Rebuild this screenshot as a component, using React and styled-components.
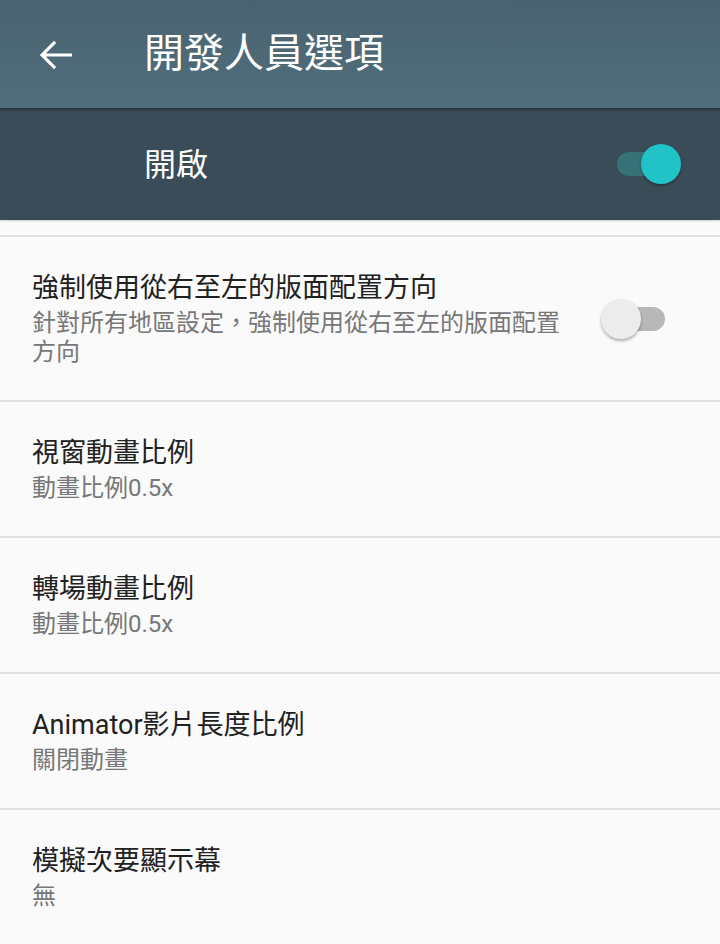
import React from "react";
import styled, { createGlobalStyle } from "styled-components";

const GlobalStyle = createGlobalStyle`
  html, body {
    margin: 0;
    padding: 0;
    background: #fafafa;
  }
  body {
    font-family: Roboto, "Noto Sans CJK TC", sans-serif;
  }
`;

const items = [
  {
    title: "強制使用從右至左的版面配置方向",
    summary: "針對所有地區設定，強制使用從右至左的版面配置方向",
    toggle: false,
  },
  { title: "視窗動畫比例", summary: "動畫比例0.5x" },
  { title: "轉場動畫比例", summary: "動畫比例0.5x" },
  { title: "Animator影片長度比例", summary: "關閉動畫" },
  { title: "模擬次要顯示幕", summary: "無" },
];

export default function App() {
  return (
    <Screen>
      <GlobalStyle />
      <Toolbar>
        <BackButton aria-label="back">
          <svg width="48" height="48" viewBox="0 0 24 24">
            <path
              fill="#ffffff"
              d="M20 11.2H6.9l5.2-5.2L11 4.9 3.9 12l7.1 7.1 1.1-1.1-5.2-5.2H20z"
            />
          </svg>
        </BackButton>
        <Title>開發人員選項</Title>
      </Toolbar>
      <MasterBar>
        <MasterLabel>開啟</MasterLabel>
        <Switch on />
      </MasterBar>
      <List>
        {items.map((item) => (
          <Item key={item.title}>
            <ItemText>
              <ItemTitle>{item.title}</ItemTitle>
              <ItemSummary>{item.summary}</ItemSummary>
            </ItemText>
            {item.toggle !== undefined && <Switch on={item.toggle} light />}
          </Item>
        ))}
      </List>
    </Screen>
  );
}

const Switch = ({ on, light }) => (
  <SwitchBox>
    <Track $on={on} $light={light} />
    <Thumb $on={on} />
  </SwitchBox>
);

const Screen = styled.div`
  width: 720px;
  height: 944px;
  overflow: hidden;
  background: #fafafa;
  display: flex;
  flex-direction: column;
`;

const Toolbar = styled.header`
  height: 108px;
  flex-shrink: 0;
  display: flex;
  align-items: center;
  padding-left: 32px;
  background: linear-gradient(#4a6370, #516e7c);
  box-shadow: 0 2px 3px rgba(0, 0, 0, 0.35);
  position: relative;
  z-index: 2;
`;

const BackButton = styled.div`
  width: 48px;
  height: 48px;
  display: flex;
  margin-top: 2px;
`;

const Title = styled.h1`
  margin: 0 0 0 64px;
  font-size: 40px;
  font-weight: 400;
  line-height: 48px;
  color: #ffffff;
`;

const MasterBar = styled.div`
  height: 112px;
  flex-shrink: 0;
  display: flex;
  align-items: center;
  justify-content: space-between;
  padding: 0 39px 0 144px;
  background: #3b4c59;
  box-shadow: 0 1px 2px rgba(0, 0, 0, 0.18);
  position: relative;
  z-index: 1;
`;

const MasterLabel = styled.div`
  font-size: 32px;
  line-height: 40px;
  color: #ffffff;
  margin-top: 2px;
`;

const List = styled.div`
  padding-top: 15px;
  display: flex;
  flex-direction: column;
`;

const Item = styled.div`
  display: flex;
  align-items: center;
  border-top: 2px solid #e0e0e0;
  padding: 33px 43px 33px 32px;
`;

const ItemText = styled.div`
  flex: 1;
  min-width: 0;
  margin-right: 30px;
`;

const ItemTitle = styled.div`
  font-size: 27px;
  line-height: 36px;
  color: #212121;
`;

const ItemSummary = styled.div`
  font-size: 24px;
  line-height: 29px;
  margin-top: 3px;
  color: #777777;
`;

const SwitchBox = styled.div`
  width: 76px;
  height: 40px;
  flex-shrink: 0;
  position: relative;
`;

const Track = styled.div`
  position: absolute;
  left: 12px;
  top: 8px;
  width: 52px;
  height: 24px;
  border-radius: 12px;
  background: ${(p) => (p.$on ? "#377279" : p.$light ? "#b8b8b8" : "#6b7780")};
`;

const Thumb = styled.div`
  position: absolute;
  top: 0;
  left: ${(p) => (p.$on ? "36px" : "0")};
  width: 40px;
  height: 40px;
  border-radius: 50%;
  background: ${(p) => (p.$on ? "#22c3c8" : "#ececec")};
  box-shadow: 0 2px 3px rgba(0, 0, 0, 0.3);
`;
